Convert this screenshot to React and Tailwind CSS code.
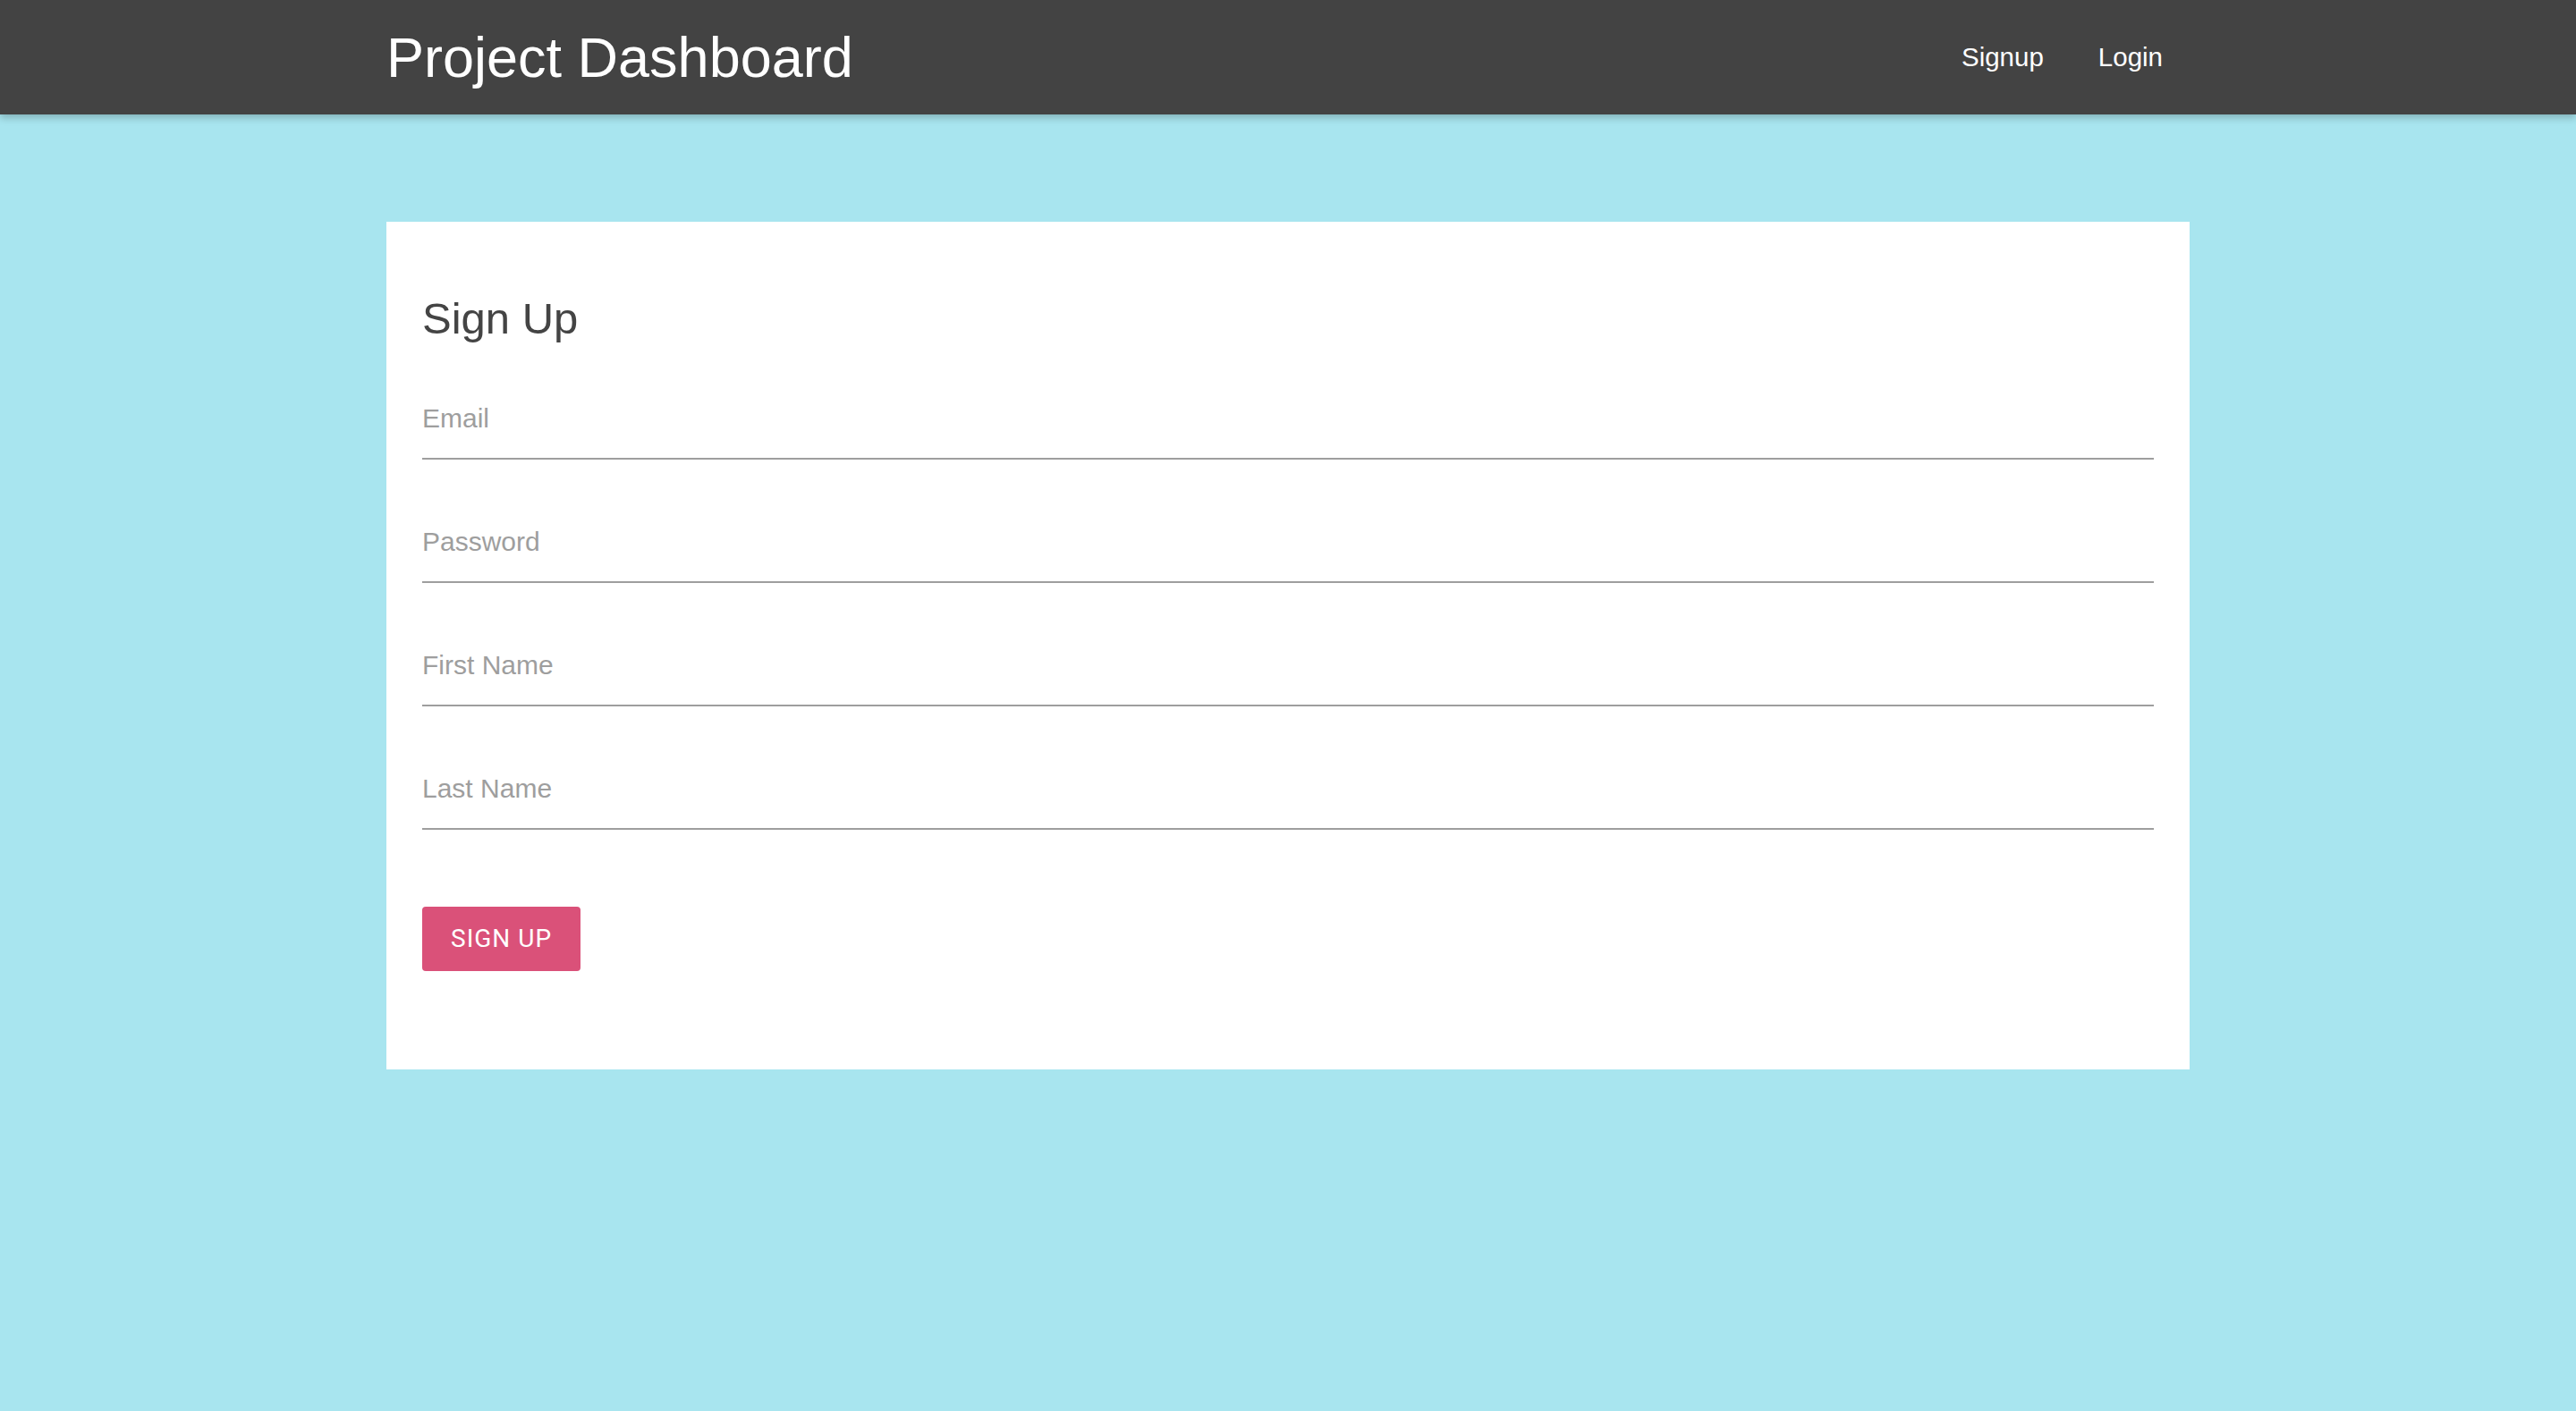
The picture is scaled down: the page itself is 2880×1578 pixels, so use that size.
export default function App() {
  const fields = ["Email", "Password", "First Name", "Last Name"];
  return (
    <div className="min-h-screen w-full bg-[#a8e5ef]" style={{ fontFamily: '"Liberation Sans", Arial, sans-serif' }}>
      <nav className="relative z-10 h-[128px] w-full bg-[#434343] shadow-[0_4px_8px_rgba(0,0,0,0.22)]">
        <div className="mx-auto flex h-full w-[2016px] items-center justify-between">
          <a className="text-[63px] leading-[128px] text-white">Project Dashboard</a>
          <ul className="flex h-full">
            <li className="px-[31px] text-[29.5px] leading-[128px] text-white">Signup</li>
            <li className="px-[30px] text-[29.5px] leading-[128px] text-white">Login</li>
          </ul>
        </div>
      </nav>
      <div className="mx-auto mt-[120px] w-[2016px] bg-white px-[40px] pt-[80px] pb-[110px]">
        <h1 className="text-[49px] leading-[56px] text-[#444444]">Sign Up</h1>
        <div className="mt-[64px] flex flex-col gap-[72px]">
          {fields.map((f) => (
            <div key={f} className="flex flex-col">
              <label className="h-[40px] text-[30px] leading-[40px] text-[#9e9e9e]">{f}</label>
              <div className="mt-[24px] h-[2px] w-full bg-[#9e9e9e]" />
            </div>
          ))}
        </div>
        <button
          className="mt-[86px] h-[72px] rounded-[4px] bg-[#da5179] px-[32px] text-[28px] leading-[72px] tracking-[1px] text-white"
          style={{ fontFamily: 'Roboto, "Liberation Sans", sans-serif' }}
        >
          SIGN UP
        </button>
      </div>
    </div>
  );
}
